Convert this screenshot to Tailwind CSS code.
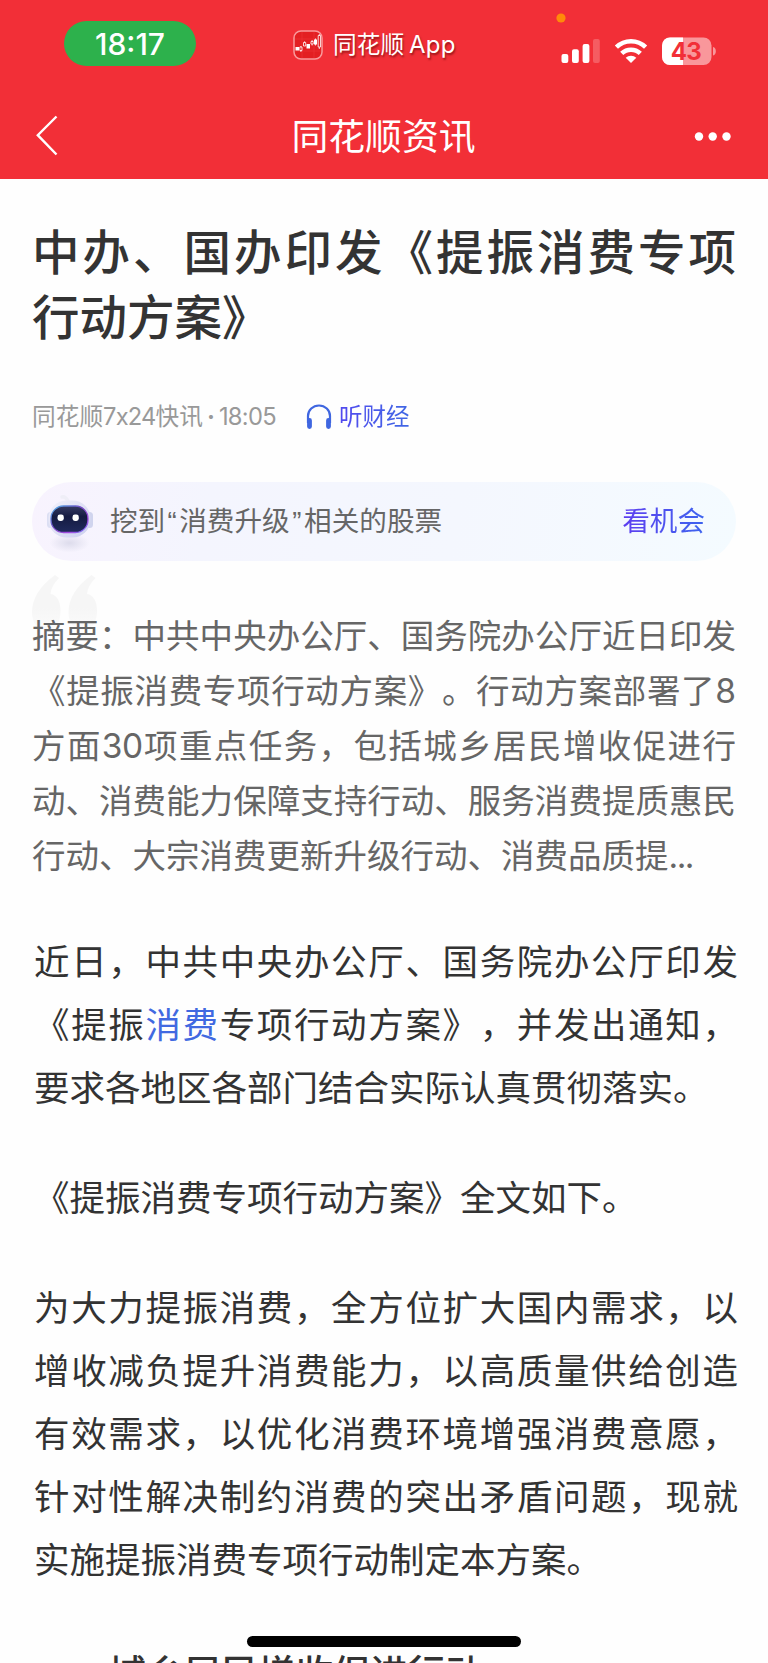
<!DOCTYPE html>
<html lang="zh-CN">
<head>
<meta charset="utf-8">
<title>同花顺资讯</title>
<script src="https://cdn.jsdelivr.net/npm/@tailwindcss/browser@4"></script>
</head>
<body class="bg-white">
<div class="relative h-[1663px] w-[768px] overflow-hidden bg-[#fefefe] font-['Inter','Noto_Sans_CJK_SC',sans-serif] whitespace-nowrap [text-spacing-trim:space-all]">

  <header class="h-[179px] bg-[#f22f37] text-white">
    <!-- status bar -->
    <div class="flex h-[88px] items-start pl-16">
      <div class="mt-[21px] flex h-[45px] w-[132px] items-center justify-center rounded-full bg-[#2db14c] pt-[2px] text-[30px] font-medium">18:17</div>
      <div class="mt-[30px] ml-[97px] flex h-[29px] items-center">
        <svg class="size-[30px]" viewBox="0 0 30 30" fill="none">
          <rect x="1" y="1" width="28" height="28" rx="7" fill="#e31f22" stroke="#f99a9c" stroke-width="1.5"/>
          <path d="M2 9h26M2 21h26M9 2v26M21 2v26" stroke="#ee3b3e" stroke-width=".5"/>
          <path d="M2.500 17h3.500v3.500H2.500zM13.500 14h3.500v4.500H13.500zM21 9.500h3v5h-3z" fill="#fff"/>
          <path d="M6.800 17h2.200v3.500h-2.200zM10.500 12.500h2.200v3.500h-2.200zM18 11.500h2.200v2.500h-2.200zM25.200 5.500h2.300v11.500h-2.300zM7.900 16v1M7.900 20.500v1.500M11.600 11.300v1.200M19.100 10v1.500M19.100 14v1.500M22.500 8.500v7M26.300 4v1.500M26.300 17v2" stroke="#fff" stroke-width=".8"/>
        </svg>
        <span class="ml-[10px] text-[23.700px] leading-[29px] [text-shadow:1px_2px_2px_rgba(80,0,0,.55)]">同花顺<span class="ml-[5px] text-[24px] tracking-[0.200px]">App</span></span>
      </div>
      <svg class="ml-[98px] h-[70px] w-[170px]" viewBox="554 0 170 70">
        <circle cx="561" cy="18" r="4.600" fill="#ff8a0a"/>
        <g fill="#fff">
          <rect x="561.500" y="54" width="6.800" height="9" rx="2"/>
          <rect x="572" y="49.300" width="6.800" height="13.700" rx="2"/>
          <rect x="582.600" y="44" width="6.800" height="19" rx="2"/>
          <rect x="593" y="39" width="6.800" height="24" rx="2" opacity=".22"/>
          <path d="M631 63l-5.300-5.200a7.600 7.600 0 0 1 10.600 0z"/>
        </g>
        <g fill="none" stroke="#fff" stroke-width="4.500">
          <path d="M616.400 47.200a20.800 20.800 0 0 1 29.200 0"/>
          <path d="M621.700 53.400a13.400 13.400 0 0 1 18.600 0"/>
        </g>
        <rect x="662" y="37.500" width="49.500" height="27.500" rx="8" fill="#f9979b"/>
        <path d="M683 37.500v27.500h-13a8 8 0 0 1-8-8v-11.500a8 8 0 0 1 8-8z" fill="#fff"/>
        <path d="M713 47c3.800 1 3.800 7.500 0 8.500z" fill="#f9979b"/>
        <text x="686.200" y="60" text-anchor="middle" font-size="24" font-weight="700" fill="#f22f37" textLength="31">43</text>
      </svg>
    </div>
    <!-- navigation bar -->
    <nav class="flex h-[91px] items-center justify-between pt-[6px] pr-9 pb-0 pl-9">
      <svg class="mb-px h-[42px] w-[119px]" viewBox="0 0 119 42" fill="none" stroke="#fff" stroke-width="2.400"><path d="M20.500 1.500L1.800 20.200 20.500 39.500"/></svg>
      <h1 class="text-[36.800px] leading-[50px] font-normal">同花顺资讯</h1>
      <svg class="h-[42px] w-[120px]" viewBox="0 0 120 42" fill="#fff"><circle cx="87" cy="20.500" r="4.200"/><circle cx="100.700" cy="20.500" r="4.200"/><circle cx="114.500" cy="20.500" r="4.200"/></svg>
    </nav>
  </header>

  <main class="px-8">
    <h2 class="mt-[42px] text-[47.500px] leading-[64.500px] font-medium text-[#333]">
      <span class="block [text-align-last:justify]">中办、国办印发《提振消费专项</span>
      <span class="block">行动方案》</span>
    </h2>

    <div class="mt-[49px] flex h-9 items-center text-[23.700px] font-normal">
      <span class="w-[274px] text-[#999]">同花顺<span class="tracking-[-0.800px]">7x24</span>快讯<span class="mx-[4px] font-bold">·</span><span class="tracking-[-0.700px]">18:05</span></span>
      <svg class="mb-[2px] size-[26px]" viewBox="0 0 26 26" fill="none" stroke="#3f66e0" stroke-width="2.200"><path d="M2 20v-7a11 10.500 0 0 1 22 0v7"/><path d="M3.500 17.500v6M22.500 17.500v6" stroke-width="4.800" stroke-linecap="round"/></svg>
      <span class="ml-[7px] bg-gradient-to-r from-[#5148ef] to-[#3f67e4] bg-clip-text text-[23.500px] text-transparent">听财经</span>
    </div>

    <!-- related stocks banner -->
    <div class="mt-[47px] flex h-[79px] items-center rounded-full bg-[linear-gradient(100deg,#f8f3fe_0%,#f4f5fe_25%,#f4f7fe_60%,#f4fbff_100%)] pr-[31px] pl-[14px] text-[27.600px] font-normal">
      <svg class="mb-[3px] h-[66px] w-[50px]" viewBox="46 488 50 66">
        <defs>
          <linearGradient id="shell" x1="0" y1="0" x2="1" y2="1"><stop stop-color="#f3f1fb"/><stop offset="1" stop-color="#cbd0ee"/></linearGradient>
          <linearGradient id="rim" x1="0" y1="0" x2="1" y2="1"><stop stop-color="#4fb5e8"/><stop offset=".45" stop-color="#7548c5"/><stop offset=".75" stop-color="#a54be0"/><stop offset="1" stop-color="#6478f5"/></linearGradient>
          <linearGradient id="visor" x1="0" y1="0" x2="0" y2="1"><stop stop-color="#353a62"/><stop offset=".4" stop-color="#151b42"/><stop offset="1" stop-color="#202a5c"/></linearGradient>
          <radialGradient id="shade"><stop stop-color="#dddcec"/><stop offset="1" stop-color="#dddcec" stop-opacity="0"/></radialGradient>
        </defs>
        <ellipse cx="69.500" cy="544" rx="20" ry="9.500" fill="url(#shade)"/>
        <path d="M62 498q3-1 6 4" fill="none" stroke="#efeef7" stroke-width="3.500" stroke-linecap="round"/>
        <rect x="47" y="513" width="7" height="16" rx="3.500" fill="#dcdff3"/>
        <rect x="86" y="513" width="7" height="16" rx="3.500" fill="#d0d4ee"/>
        <rect x="48.500" y="501.500" width="42" height="37" rx="18" fill="url(#shell)"/>
        <rect x="51" y="507" width="37" height="26.500" rx="12.500" fill="url(#visor)" stroke="url(#rim)" stroke-width="1.300"/>
        <rect x="57.500" y="515.500" width="6.300" height="6.500" rx="2.400" fill="#fff"/>
        <rect x="72.500" y="515.500" width="6.300" height="6.500" rx="2.400" fill="#fff"/>
      </svg>
      <span class="ml-[14px] flex-1 pt-px text-[#666]">挖到<span class="inline-block w-[14px] text-center font-['Liberation_Sans',sans-serif] leading-none">“</span>消费升级<span class="inline-block w-[14.500px] text-center font-['Liberation_Sans',sans-serif] leading-none">”</span>相关的股票</span>
      <span class="bg-gradient-to-r from-[#5c3df0] to-[#3b63ee] bg-clip-text pt-px text-transparent">看机会</span>
    </div>

    <!-- summary -->
    <section class="relative mt-[48px] text-[33.500px] leading-[55px] font-normal text-[#666]">
      <svg class="absolute top-[-34px] left-0 h-[56px] w-[66px]" viewBox="0 0 66 56">
        <defs>
          <linearGradient id="fade" x1="0" y1="0" x2="0" y2="1"><stop offset=".6" stop-color="#f6f6f6"/><stop offset="1" stop-color="#fbfbfb"/></linearGradient>
          <path id="comma" d="M23 0Q0 17 0 37C0 47 5 55 14 55C23 55 28.500 48 28.500 36C28.500 26 25 20 18.500 19Q19 11 27 3Z" fill="url(#fade)"/>
        </defs>
        <use href="#comma"/><use href="#comma" x="36.500"/>
      </svg>
      <p class="relative">
        <span class="block [text-align-last:justify]">摘要：中共中央办公厅、国务院办公厅近日印发</span>
        <span class="block [text-align-last:justify]">《提振消费专项行动方案》。行动方案部署了8</span>
        <span class="block [text-align-last:justify]">方面<span class="tracking-[-0.500px]">30</span>项重点任务，包括城乡居民增收促进行</span>
        <span class="block [text-align-last:justify]">动、消费能力保障支持行动、服务消费提质惠民</span>
        <span class="block">行动、大宗消费更新升级行动、消费品质提<span class="tracking-[-1.500px]">...</span></span>
      </p>
    </section>

    <!-- article -->
    <article class="mt-[47px] ml-[2px] w-[704px] text-[35.500px] leading-[63px] font-normal text-[#333]">
      <p>
        <span class="block [text-align-last:justify]">近日，中共中央办公厅、国务院办公厅印发</span>
        <span class="block [text-align-last:justify]">《提振<a class="text-[#4169e1]">消费</a>专项行动方案》，并发出通知，</span>
        <span class="block">要求各地区各部门结合实际认真贯彻落实。</span>
      </p>
      <p class="mt-[47px]">《提振消费专项行动方案》全文如下。</p>
      <p class="mt-[47px]">
        <span class="block [text-align-last:justify]">为大力提振消费，全方位扩大国内需求，以</span>
        <span class="block [text-align-last:justify]">增收减负提升消费能力，以高质量供给创造</span>
        <span class="block [text-align-last:justify]">有效需求，以优化消费环境增强消费意愿，</span>
        <span class="block [text-align-last:justify]">针对性解决制约消费的突出矛盾问题，现就</span>
        <span class="block">实施提振消费专项行动制定本方案。</span>
      </p>
      <h3 class="mt-[50px] text-[37.400px] font-medium">一、城乡居民增收促进行动</h3>
    </article>
  </main>

  <div class="absolute top-[1636px] left-[247px] h-[10.500px] w-[274px] rounded-full bg-black"></div>
</div>
</body>
</html>
